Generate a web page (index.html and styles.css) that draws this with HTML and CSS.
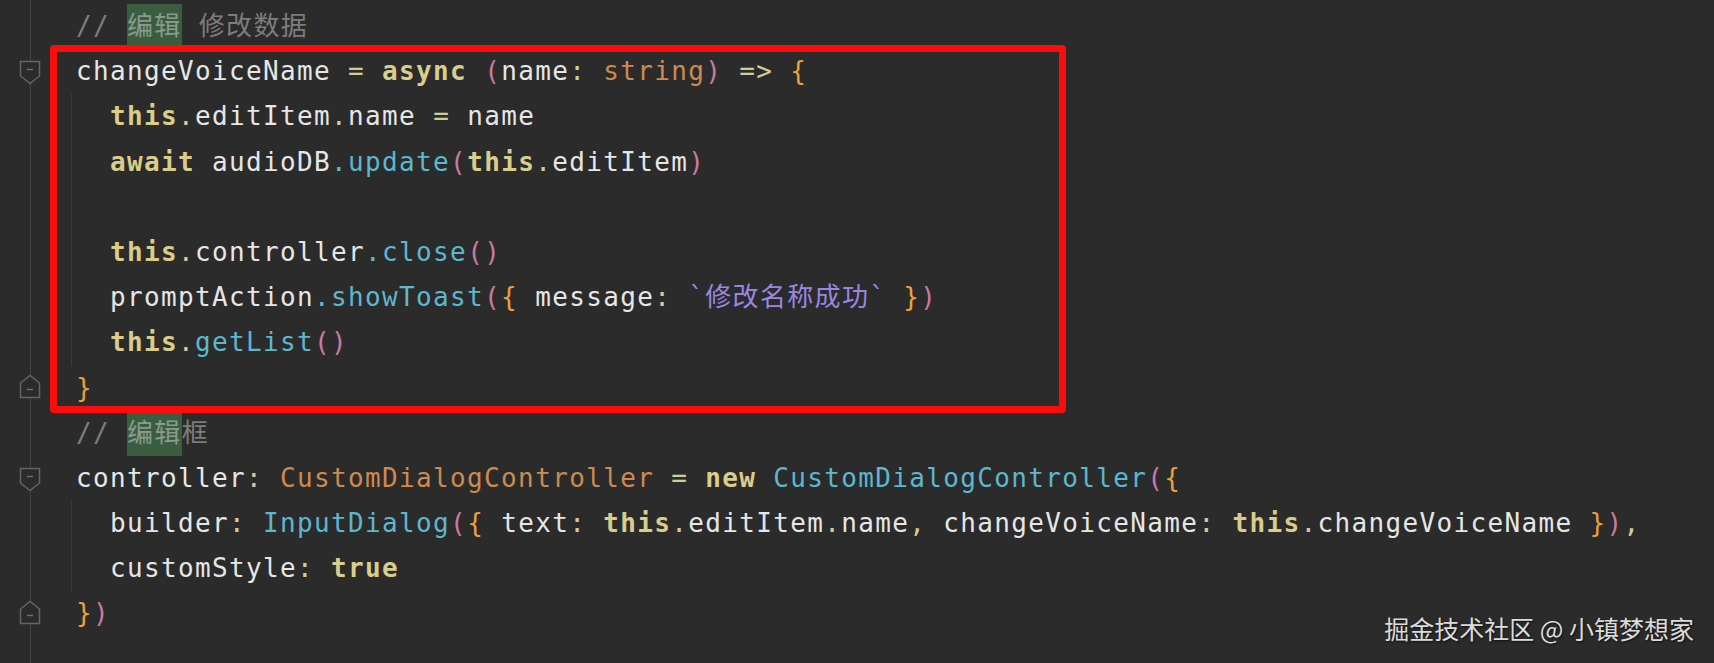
FILE: index.html
```html
<!DOCTYPE html>
<html lang="zh">
<head>
<meta charset="utf-8">
<title>Editor</title>
<link rel="stylesheet" href="styles.css">
</head>
<body>
<div class="editor">
  <div class="line"><div class="gut"></div><div class="code"><span class="cm">// <span class="hl">编辑</span> 修改数据</span></div></div>
  <div class="line"><div class="gut"><svg class="fold" viewBox="0 0 22 25" width="22" height="25"><path d="M1.5 1.5 H20.5 V16 L11 23.5 L1.5 16 Z"/><line x1="8" y1="9.5" x2="14" y2="9.5"/></svg></div><div class="code">changeVoiceName <span class="p">=</span> <span class="kw">async</span> <span class="pr">(</span>name<span class="p">:</span> <span class="ty">string</span><span class="pr">)</span> <span class="p">=&gt;</span> <span class="br">{</span></div></div>
  <div class="line g"><div class="gut"></div><div class="code">  <span class="kw">this</span><span class="p">.</span>editItem<span class="p">.</span>name <span class="p">=</span> name</div></div>
  <div class="line g"><div class="gut"></div><div class="code">  <span class="kw">await</span> audioDB<span class="fn">.update</span><span class="pr">(</span><span class="kw">this</span><span class="p">.</span>editItem<span class="pr">)</span></div></div>
  <div class="line g"><div class="gut"></div><div class="code"> </div></div>
  <div class="line g"><div class="gut"></div><div class="code">  <span class="kw">this</span><span class="p">.</span>controller<span class="fn">.close</span><span class="pr">()</span></div></div>
  <div class="line g"><div class="gut"></div><div class="code">  promptAction<span class="fn">.showToast</span><span class="pr">(</span><span class="br">{</span> message<span class="p">:</span> <span class="str">`修改名称成功`</span> <span class="br">}</span><span class="pr">)</span></div></div>
  <div class="line g"><div class="gut"></div><div class="code">  <span class="kw">this</span><span class="p">.</span><span class="fn">getList</span><span class="pr">()</span></div></div>
  <div class="line"><div class="gut"><svg class="fold up" viewBox="0 0 22 25" width="22" height="25"><path d="M1.5 23.5 H20.5 V9 L11 1.5 L1.5 9 Z"/><line x1="8" y1="15.5" x2="14" y2="15.5"/></svg></div><div class="code"><span class="br">}</span></div></div>
  <div class="line"><div class="gut"></div><div class="code"><span class="cm">// <span class="hl">编辑</span>框</span></div></div>
  <div class="line"><div class="gut"><svg class="fold" viewBox="0 0 22 25" width="22" height="25"><path d="M1.5 1.5 H20.5 V16 L11 23.5 L1.5 16 Z"/><line x1="8" y1="9.5" x2="14" y2="9.5"/></svg></div><div class="code">controller<span class="p">:</span> <span class="ty">CustomDialogController</span> <span class="p">=</span> <span class="kw">new</span> <span class="fn">CustomDialogController</span><span class="pr">(</span><span class="br">{</span></div></div>
  <div class="line g"><div class="gut"></div><div class="code">  builder<span class="p">:</span> <span class="fn">InputDialog</span><span class="pr">(</span><span class="br">{</span> text<span class="p">:</span> <span class="kw">this</span><span class="p">.</span>editItem<span class="p">.</span>name<span class="p">,</span> changeVoiceName<span class="p">:</span> <span class="kw">this</span><span class="p">.</span>changeVoiceName <span class="br">}</span><span class="pr">)</span><span class="p">,</span></div></div>
  <div class="line g"><div class="gut"></div><div class="code">  customStyle<span class="p">:</span> <span class="kw">true</span></div></div>
  <div class="line"><div class="gut"><svg class="fold up" viewBox="0 0 22 25" width="22" height="25"><path d="M1.5 23.5 H20.5 V9 L11 1.5 L1.5 9 Z"/><line x1="8" y1="15.5" x2="14" y2="15.5"/></svg></div><div class="code"><span class="br">}</span><span class="pr">)</span></div></div>

  <div class="mark"></div>
  <div class="watermark">掘金技术社区 @ 小镇梦想家</div>
</div>
</body>
</html>
```
FILE: styles.css
```css
html, body {
  margin: 0;
  padding: 0;
  background: #2b2b2b;
}

.editor {
  position: relative;
  width: 1714px;
  height: 663px;
  overflow: hidden;
  box-sizing: border-box;
  padding-top: 4px;
  background:
    linear-gradient(#454545, #454545) no-repeat 30px 0 / 1px 100%,
    #2b2b2b;
  font-family: "DejaVu Sans Mono", "Noto Sans CJK SC", monospace;
  font-size: 26px;
  letter-spacing: 1.35px;
  color: #e6e6e6;
}

.line {
  display: grid;
  grid-template-columns: 60px 1fr;
  height: 45.2px;
  align-items: center;
}

.line.g {
  background: linear-gradient(#3a3a3a, #3a3a3a) no-repeat 71px 0 / 1px 100%;
}

.gut {
  display: flex;
  justify-content: center;
  align-items: center;
  height: 100%;
}

.fold {
  display: block;
  margin-top: 2px;
}
.fold.up {
  margin-top: -4px;
}
.fold path {
  fill: #2b2b2b;
  stroke: #646464;
  stroke-width: 1.5;
}
.fold line {
  stroke: #707070;
  stroke-width: 1.4;
}

.code {
  padding-left: 16px;
  white-space: pre;
  line-height: 45.2px;
}

.cm { color: #7d7d7d; }
.hl {
  background: #3a5d40;
  color: #8a9a8c;
  display: inline-block;
  height: 45.2px;
  vertical-align: top;
}
.kw { color: #d9cd89; font-weight: bold; }
.p { color: #d3cb97; }
.pr { color: #c97aa0; }
.br { color: #eca03c; }
.ty { color: #cd8a50; }
.fn { color: #5cb7cf; }
.str { color: #9a87e2; }

.mark {
  position: absolute;
  left: 50px;
  top: 45px;
  width: 1016px;
  height: 368px;
  box-sizing: border-box;
  border: 7px solid #fa0d0d;
  border-radius: 4px;
}

.watermark {
  position: absolute;
  right: 20px;
  top: 611px;
  font-family: "Noto Sans CJK SC", sans-serif;
  font-size: 25px;
  letter-spacing: 0;
  color: #dcdcdc;
  text-shadow: 1px 1px 2px #111;
  line-height: 34px;
}
```
